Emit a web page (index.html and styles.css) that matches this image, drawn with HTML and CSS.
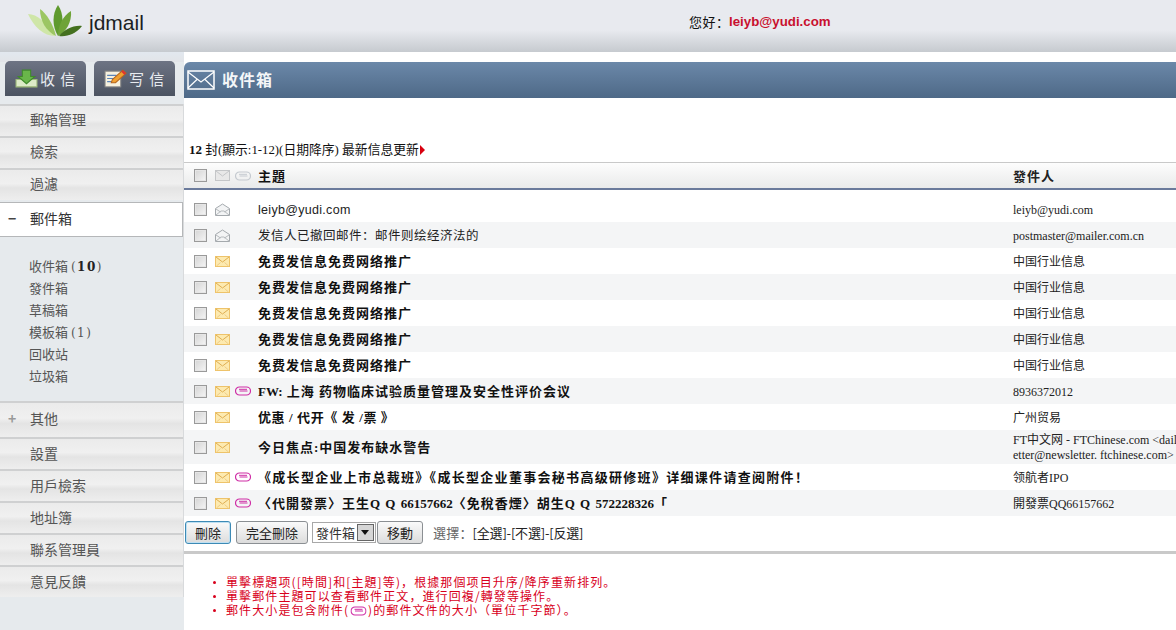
FILE: index.html
```html
<!DOCTYPE html>
<html lang="zh">
<head>
<meta charset="utf-8">
<title>jdmail</title>
<link rel="stylesheet" href="styles.css">
</head>
<body>
<svg class="defs" width="0" height="0" aria-hidden="true">
  <symbol id="env-new" viewBox="0 0 15 13"><rect x=".5" y="1.5" width="14" height="10" fill="#fdeab0" stroke="#eec36a"/><path d="M1 2l6.500 5L14 2" fill="none" stroke="#dfae52"/><path d="M1.500 11l4-3.500M13.500 11l-4-3.500" fill="none" stroke="#efcc86"/></symbol>
  <symbol id="env-read" viewBox="0 0 15 13"><path d="M.5 5.500L7.500 1l7 4.500v7H.5z" fill="#f3f4f5" stroke="#a4a9ad"/><path d="M1 12l5-4h3l5 4M1 6l4.500 3M14 6L9.500 9" fill="none" stroke="#b6babd"/></symbol>
  <symbol id="env-head" viewBox="0 0 15 13"><rect x=".5" y="1.500" width="14" height="10" fill="#e8e8e8" stroke="#c4c6c8"/><path d="M1 2l6.500 5L14 2" fill="none" stroke="#c4c6c8"/></symbol>
  <symbol id="clip" viewBox="0 0 16 10"><path d="M4.500 1h7a4 4 0 0 1 0 8h-7a4 4 0 0 1 0-8z" fill="none" stroke="currentColor" stroke-width="1.200"/><path d="M12.500 5H4.500M4 3.300h8" fill="none" stroke="currentColor"/></symbol>
</svg>

<header class="top">
  <div class="brand">
    <svg class="logo" viewBox="0 0 54 32" aria-hidden="true">
      <path d="M0 9C9 9 19 18 27 31 16 31 6 22 0 9z" fill="#cfe6a8"/>
      <path d="M12 4C19 9 25 19 28 31 18 26 12 16 12 4z" fill="#9cc663"/>
      <path d="M30 0C36 9 36 21 30 31 24 21 24 9 30 0z" fill="#5f9a2e"/>
      <path d="M43 6C44 17 38 27 30 31 30 20 35 11 43 6z" fill="#6ea338"/>
      <path d="M54 21C48 29 39 32 31 31 36 25 45 20 54 21z" fill="#44701f"/>
    </svg>
    <span class="brand-name">jdmail</span>
  </div>
  <div class="user"><span class="hello">您好：</span><strong class="user-mail">leiyb@yudi.com</strong></div>
</header>

<div class="layout">
  <aside class="side">
    <div class="actions">
      <a class="action">
        <svg class="action-icon" viewBox="0 0 22 18" aria-hidden="true"><path d="M1 10h20v7H1z" fill="#dcebc8" stroke="#9dbb7a"/><path d="M7 1h8v6h4l-8 7-8-7h4z" fill="#69b54a" stroke="#3f8a2b"/></svg>
        <span>收&nbsp;信</span>
      </a>
      <a class="action">
        <svg class="action-icon" viewBox="0 0 22 18" aria-hidden="true"><rect x="1" y="2" width="15" height="15" fill="#f6f1df" stroke="#888"/><path d="M3 6h9M3 9h7M3 12h6" stroke="#5a83b8"/><path d="M7 13l1-3 10-9 3 3-10 9z" fill="#f0a030" stroke="#b5651d"/><path d="M18 1l3 3-1.500 1.500-3-3z" fill="#d33"/></svg>
        <span>写&nbsp;信</span>
      </a>
    </div>
    <nav class="menu">
      <a class="menu-item">郵箱管理</a>
      <a class="menu-item">檢索</a>
      <a class="menu-item">過濾</a>
      <a class="menu-item menu-open"><span class="toggle">−</span>郵件箱</a>
      <ul class="folders">
        <li>收件箱 <span class="count">(<b>10</b>)</span></li>
        <li>發件箱</li>
        <li>草稿箱</li>
        <li>模板箱 <span class="count">(1)</span></li>
        <li>回收站</li>
        <li>垃圾箱</li>
      </ul>
      <a class="menu-item menu-other"><span class="toggle plus">+</span>其他</a>
      <a class="menu-item">設置</a>
      <a class="menu-item">用戶檢索</a>
      <a class="menu-item">地址簿</a>
      <a class="menu-item">聯系管理員</a>
      <a class="menu-item">意見反饋</a>
    </nav>
  </aside>

  <main class="content">
    <h1 class="title">
      <svg class="title-icon" viewBox="0 0 28 20" aria-hidden="true"><rect x="1" y="1" width="26" height="18" fill="none" stroke="#fff" stroke-width="1.500"/><path d="M1 2l13 10L27 2M1 18l9.500-9M27 18l-9.500-9" fill="none" stroke="#fff" stroke-width="1.200"/></svg>
      <span class="title-text">收件箱</span>
    </h1>
    <p class="status"><b>12</b> 封(顯示:1-12)(日期降序) 最新信息更新<i class="arrow"></i></p>

    <div class="row row-head">
      <span class="check"></span>
      <svg class="icon"><use href="#env-head"/></svg>
      <svg class="clip clip-head"><use href="#clip"/></svg>
      <span class="subject">主題</span>
      <span class="from">發件人</span>
    </div>

    <div class="rows">
      <div class="row read"><span class="check"></span><svg class="icon"><use href="#env-read"/></svg><span class="clip"></span><span class="subject subject-latin">leiyb@yudi.com</span><span class="from">leiyb@yudi.com</span></div>
      <div class="row read"><span class="check"></span><svg class="icon"><use href="#env-read"/></svg><span class="clip"></span><span class="subject">发信人已撤回邮件：邮件则绘经济法的</span><span class="from">postmaster@mailer.com.cn</span></div>
      <div class="row"><span class="check"></span><svg class="icon"><use href="#env-new"/></svg><span class="clip"></span><span class="subject">免费发信息免费网络推广</span><span class="from">中国行业信息</span></div>
      <div class="row"><span class="check"></span><svg class="icon"><use href="#env-new"/></svg><span class="clip"></span><span class="subject">免费发信息免费网络推广</span><span class="from">中国行业信息</span></div>
      <div class="row"><span class="check"></span><svg class="icon"><use href="#env-new"/></svg><span class="clip"></span><span class="subject">免费发信息免费网络推广</span><span class="from">中国行业信息</span></div>
      <div class="row"><span class="check"></span><svg class="icon"><use href="#env-new"/></svg><span class="clip"></span><span class="subject">免费发信息免费网络推广</span><span class="from">中国行业信息</span></div>
      <div class="row"><span class="check"></span><svg class="icon"><use href="#env-new"/></svg><span class="clip"></span><span class="subject">免费发信息免费网络推广</span><span class="from">中国行业信息</span></div>
      <div class="row"><span class="check"></span><svg class="icon"><use href="#env-new"/></svg><svg class="clip clip-on"><use href="#clip"/></svg><span class="subject"><span class="tight">FW:</span> 上海 药物临床试验质量管理及安全性评价会议</span><span class="from">8936372012</span></div>
      <div class="row"><span class="check"></span><svg class="icon"><use href="#env-new"/></svg><span class="clip"></span><span class="subject subject-short">优惠 / 代开《 发 /票 》</span><span class="from">广州贸易</span></div>
      <div class="row row-tall"><span class="check"></span><svg class="icon"><use href="#env-new"/></svg><span class="clip"></span><span class="subject">今日焦点:中国发布缺水警告</span><span class="from from-wrap">FT中文网 - FTChinese.com &lt;daily<br>etter@newsletter. ftchinese.com&gt;</span></div>
      <div class="row"><span class="check"></span><svg class="icon"><use href="#env-new"/></svg><svg class="clip clip-on"><use href="#clip"/></svg><span class="subject subject-long">《成长型企业上市总裁班》《成长型企业董事会秘书高级研修班》详细课件请查阅附件！</span><span class="from">领航者IPO</span></div>
      <div class="row"><span class="check"></span><svg class="icon"><use href="#env-new"/></svg><svg class="clip clip-on"><use href="#clip"/></svg><span class="subject">〈代開發票〉王生Q Q <span class="tight">66157662</span>〈免稅香煙〉胡生Q Q <span class="tight">572228326</span>「</span><span class="from">開發票QQ66157662</span></div>
    </div>

    <div class="toolbar">
      <button class="btn btn-primary" type="button">刪除</button>
      <button class="btn btn-wide" type="button">完全刪除</button>
      <div class="select"><span class="select-text">發件箱</span><span class="select-arrow"></span></div>
      <button class="btn btn-move" type="button">移動</button>
      <span class="pick"><span class="pick-label">選擇：</span>[全選]-[不選]-[反選]</span>
    </div>

    <ul class="notes">
      <li>單擊標題项([時間]和[主題]等)，根據那個项目升序/降序重新排列。</li>
      <li>單擊郵件主題可以查看郵件正文，進行回複/轉發等操作。</li>
      <li>郵件大小是包含附件(<svg class="clip clip-note" viewBox="0 0 16 10"><use href="#clip"/></svg>)的郵件文件的大小（單位千字節）。</li>
    </ul>
  </main>
</div>
</body>
</html>
```
FILE: styles.css
```css
* { box-sizing: border-box; }
html, body { margin: 0; height: 630px; overflow: hidden; background: #fff; }
body { font: 12px "Liberation Serif", "Noto Sans CJK SC", serif; color: #111; }
.defs { display: block; height: 0; }

.top {
  height: 52px;
  display: flex;
  align-items: flex-start;
  background: linear-gradient(#e8eaef 0, #e8eaef 30px, #c6cacf 52px);
}
.brand { width: 689px; padding: 5px 0 0 28px; display: flex; align-items: flex-start; }
.logo { width: 54px; height: 32px; display: block; }
.brand-name { font: 21px/26px "Liberation Sans", sans-serif; color: #1c1f22; margin: 5px 0 0 7px; }
.user { padding-top: 13px; line-height: 18px; display: flex; }
.hello { font: 13px/18px "Noto Sans CJK SC", sans-serif; color: #111; width: 40px; letter-spacing: .5px; white-space: nowrap; }
.user-mail { font: bold 13.300px/18px "Liberation Sans", sans-serif; color: #c8102e; }

.layout { display: flex; height: 578px; background: linear-gradient(#e2e8ef 0, #e2e4e8 10px, #e6eaed 10px); }
.side { width: 184px; flex: none; }
.actions { display: flex; gap: 8px; padding: 9px 0 0 5px; height: 52px; }
.action {
  width: 81px; height: 35px;
  display: flex; align-items: center; padding-left: 10px; gap: 2px;
  border-radius: 5px 5px 0 0;
  background: linear-gradient(#6e7484, #4b5361);
  color: #e8ebef;
  font: 15px "Noto Sans CJK SC", sans-serif;
  letter-spacing: 1px;
}
.action-icon { width: 23px; height: 19px; flex: none; }

.menu { background: #e6eaed; border-right: 1px solid #d8dadc; }
.menu-item {
  display: block; height: 32px;
  padding-left: 30px;
  font: 14px/29px "Noto Sans CJK SC", sans-serif;
  color: #555;
  border-top: 2px solid #cfd0d1;
  background: linear-gradient(#ebebeb 0, #f0f0f0 45%, #e4e4e4 60%, #eeeeee 100%);
  position: relative;
}
.menu-item:nth-child(-n+3) { line-height: 27px; }
.menu-open {
  height: 35px; margin-top: 2px; line-height: 31px;
  background: #fff; color: #333;
  border: 1px solid #b5b7b9; border-left: 0; border-right-color: #b5b7b9;
}
.menu-other { height: 36px; line-height: 30px; }
.toggle { position: absolute; left: 8px; top: 0; font-weight: bold; color: #444; }
.plus { color: #999; }
.folders {
  list-style: none; margin: 0; padding: 18px 0 14px 29px; height: 164px;
  background: #e6eaed;
  font: 13px/22px "Noto Sans CJK SC", sans-serif; color: #555;
}
.folders li { height: 22px; }
.count { font: 12px/12px "DejaVu Serif", serif; letter-spacing: 1.500px; }
.count b { color: #222; }

.content { flex: 1; min-width: 0; background: #fff; padding-top: 10px; }
.title {
  margin: 0; height: 36px;
  display: flex; align-items: center; gap: 7px;
  padding: 0 0 0 3px;
  background: linear-gradient(#6b88a9, #4e6987);
  border-radius: 6px 0 0 0;
  color: #f4f6f8;
  font: bold 16px/20px "Noto Sans CJK SC", sans-serif;
  letter-spacing: 1px;
}
.title-icon { width: 28px; height: 20px; }
.title-text { padding-bottom: 2px; }
.status { margin: 0; padding: 44px 0 0 5px; height: 64px; line-height: 15px; font-size: 12.800px; color: #111; }
.status b { font-size: 13px; }
.arrow {
  display: inline-block; vertical-align: -1px; margin-left: 1px;
  border-left: 5px solid #d8000f; border-top: 5px solid transparent; border-bottom: 5px solid transparent;
}

.row {
  height: 26px; display: flex; align-items: center;
  padding-left: 10px; white-space: nowrap;
}
.row-head {
  height: 28px;
  border-top: 1px solid #c9c9c9;
  border-bottom: 2px solid #6a7a9b;
  background: linear-gradient(#fdfdfd, #e9eaea);
}
.rows { padding-top: 6px; }
.rows .row:nth-child(even) { background: #f4f5f6; }
.rows .row-tall { height: 34px; }
.check {
  width: 13px; height: 13px; flex: none;
  border: 1px solid #9a9a9a;
  background: linear-gradient(135deg, #d4d4d4, #f6f6f6);
  box-shadow: inset 0 0 0 1px #e6e6e6;
}
.icon { width: 15px; height: 13px; flex: none; margin-left: 8px; }
.clip { width: 16px; height: 10px; flex: none; margin-left: 5px; display: block; }
.clip-head { color: #c5cad0; }
.clip-on { color: #cf2fa6; }
.subject {
  width: 755px; flex: none; margin-left: 7px; overflow: hidden; padding-top: 2px;
  font: bold 13px/18px "Liberation Serif", "Noto Sans CJK SC", serif; letter-spacing: 1px; color: #111;
}
.tight { letter-spacing: 0; }
.subject-long { letter-spacing: 1.300px; }
.subject-short { letter-spacing: .6px; }
.read .subject { font: 12.500px/18px "Liberation Sans", "Noto Sans CJK SC", sans-serif; letter-spacing: .5px; color: #222; }
.read .subject-latin { letter-spacing: .3px; }
.from { font: 12px/14px "Liberation Serif", "Noto Sans CJK SC", serif; color: #222; padding-top: 2px; }
.row-head .subject, .row-head .from { font: bold 13px/18px "Noto Sans CJK SC", sans-serif; letter-spacing: 1px; padding-top: 0; }
.from-wrap { line-height: 15px; font-size: 12px; }

.toolbar { display: flex; align-items: center; height: 24px; margin-top: 4px; padding-left: 1px; }
.btn {
  height: 23px; padding: 0; width: 72px;
  border: 1px solid #8b8f93; border-radius: 3px;
  background: linear-gradient(#fafafa, #dcdcdc);
  font: 13px "Noto Sans CJK SC", sans-serif; color: #222;
}
.btn-primary { width: 46px; margin-right: 5px; border-color: #3d8ab5; box-shadow: inset 0 0 0 1px #bfe0f2; }
.btn-move { width: 46px; }
.select {
  width: 64px; height: 21px; margin: 0 1px 0 4px;
  display: flex; align-items: center; justify-content: space-between;
  border: 1px solid #a8a8a8; background: #fff; padding-left: 3px;
  font: 13px "Noto Sans CJK SC", sans-serif; color: #333;
}
.select-text { white-space: nowrap; }
.select-arrow {
  width: 17px; height: 17px; flex: none; margin-right: 1px; position: relative;
  background: #d6d6d6; border: 1px solid #666;
}
.select-arrow::after {
  content: ""; position: absolute; left: 3px; top: 5px;
  border-top: 5px solid #111; border-left: 4px solid transparent; border-right: 4px solid transparent;
}
.pick { margin-left: 10px; font: 13px "Noto Sans CJK SC", sans-serif; color: #222; letter-spacing: -.2px; }
.pick-label { color: #666; letter-spacing: .2px; }

.notes {
  list-style: none; margin: 7px 0 0; padding: 21px 0 0 42px;
  border-top: 3px solid #c9c9c9;
  font: 12px/14px "Noto Sans CJK SC", sans-serif; color: #d8001c; letter-spacing: 1.100px;
}
.notes li { position: relative; height: 14px; }
.notes li::before {
  content: ""; position: absolute; left: -13px; top: 6px;
  width: 3px; height: 3px; border-radius: 50%; background: #d8001c;
}
.clip-note { display: inline-block; width: 19px; margin: 0; color: #cf2fa6; vertical-align: -1px; }
```
